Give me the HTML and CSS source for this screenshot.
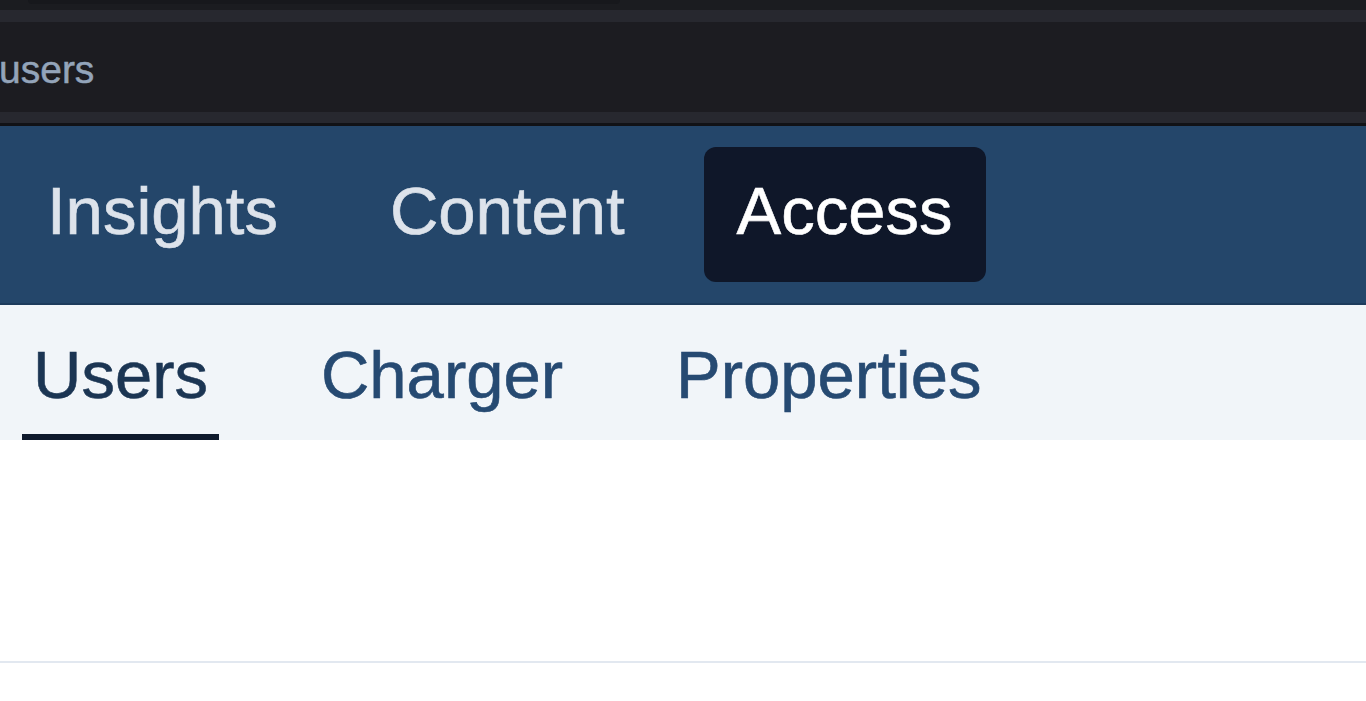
FILE: index.html
```html
<!DOCTYPE html>
<html lang="en">
<head>
<meta charset="utf-8">
<title>Access - Users</title>
<link rel="stylesheet" href="styles.css">
</head>
<body>
  <header class="chrome">
    <div class="chrome-top"><div class="chrome-pill"></div></div>
    <div class="chrome-band"></div>
    <div class="urlbar"><span class="url">users</span></div>
    <div class="chrome-band chrome-band-low"></div>
    <div class="chrome-edge"></div>
  </header>
  <nav class="mainnav">
    <a class="main-tab">Insights</a>
    <a class="main-tab">Content</a>
    <a class="main-tab is-active">Access</a>
  </nav>
  <nav class="subnav">
    <a class="sub-tab is-active">Users</a>
    <a class="sub-tab">Charger</a>
    <a class="sub-tab">Properties</a>
  </nav>
  <main class="content"></main>
</body>
</html>
```

FILE: styles.css
```css
* { box-sizing: border-box; }

html, body {
  margin: 0;
  padding: 0;
  background: #ffffff;
  font-family: "Liberation Sans", Arial, Helvetica, sans-serif;
  overflow: hidden;
}

.chrome {
  background: #1c1c21;
}

.chrome-top {
  height: 10px;
  background: #1b1c20;
  padding-left: 28px;
}

.chrome-pill {
  width: 592px;
  height: 4px;
  background: #17181c;
  border-radius: 0 0 6px 6px;
}

.chrome-band {
  height: 12px;
  background: #27282f;
}

.chrome-band-low {
  height: 11px;
}

.urlbar {
  height: 90px;
  padding-top: 28px;
  background: #1c1c21;
}

.url {
  display: block;
  margin-left: -1px;
  font-size: 39px;
  line-height: 39px;
  color: #93a4ba;
  -webkit-text-stroke: 0.5px #93a4ba;
}

.chrome-edge {
  height: 3px;
  background: #111216;
}

.mainnav {
  display: flex;
  align-items: center;
  gap: 46px;
  height: 179px;
  padding: 0 0 0 14px;
  background: #24466a;
  border-bottom: 2px solid #1d3b5c;
}

.main-tab {
  display: block;
  height: 135px;
  padding: 14px 33px 22px;
  font-size: 67px;
  line-height: 99px;
  color: #dde3eb;
  -webkit-text-stroke: 0.6px #dde3eb;
  border-radius: 12px;
  white-space: nowrap;
}

.main-tab.is-active {
  background: #0f1729;
  color: #ffffff;
  -webkit-text-stroke: 0.6px #ffffff;
}

.subnav {
  display: flex;
  gap: 91px;
  height: 135px;
  padding-left: 22px;
  background: #f1f5f9;
}

.sub-tab {
  display: block;
  height: 135px;
  padding: 20px 11px 10px;
  font-size: 67px;
  line-height: 99px;
  color: #264a72;
  -webkit-text-stroke: 0.6px #264a72;
  border-bottom: 6px solid transparent;
  white-space: nowrap;
}

.sub-tab.is-active {
  color: #1b3553;
  -webkit-text-stroke: 0.6px #1b3553;
  border-bottom-color: #0f1a2d;
}

.content {
  height: 223px;
  border-bottom: 2px solid #e2e8f0;
  background: #ffffff;
}
```
